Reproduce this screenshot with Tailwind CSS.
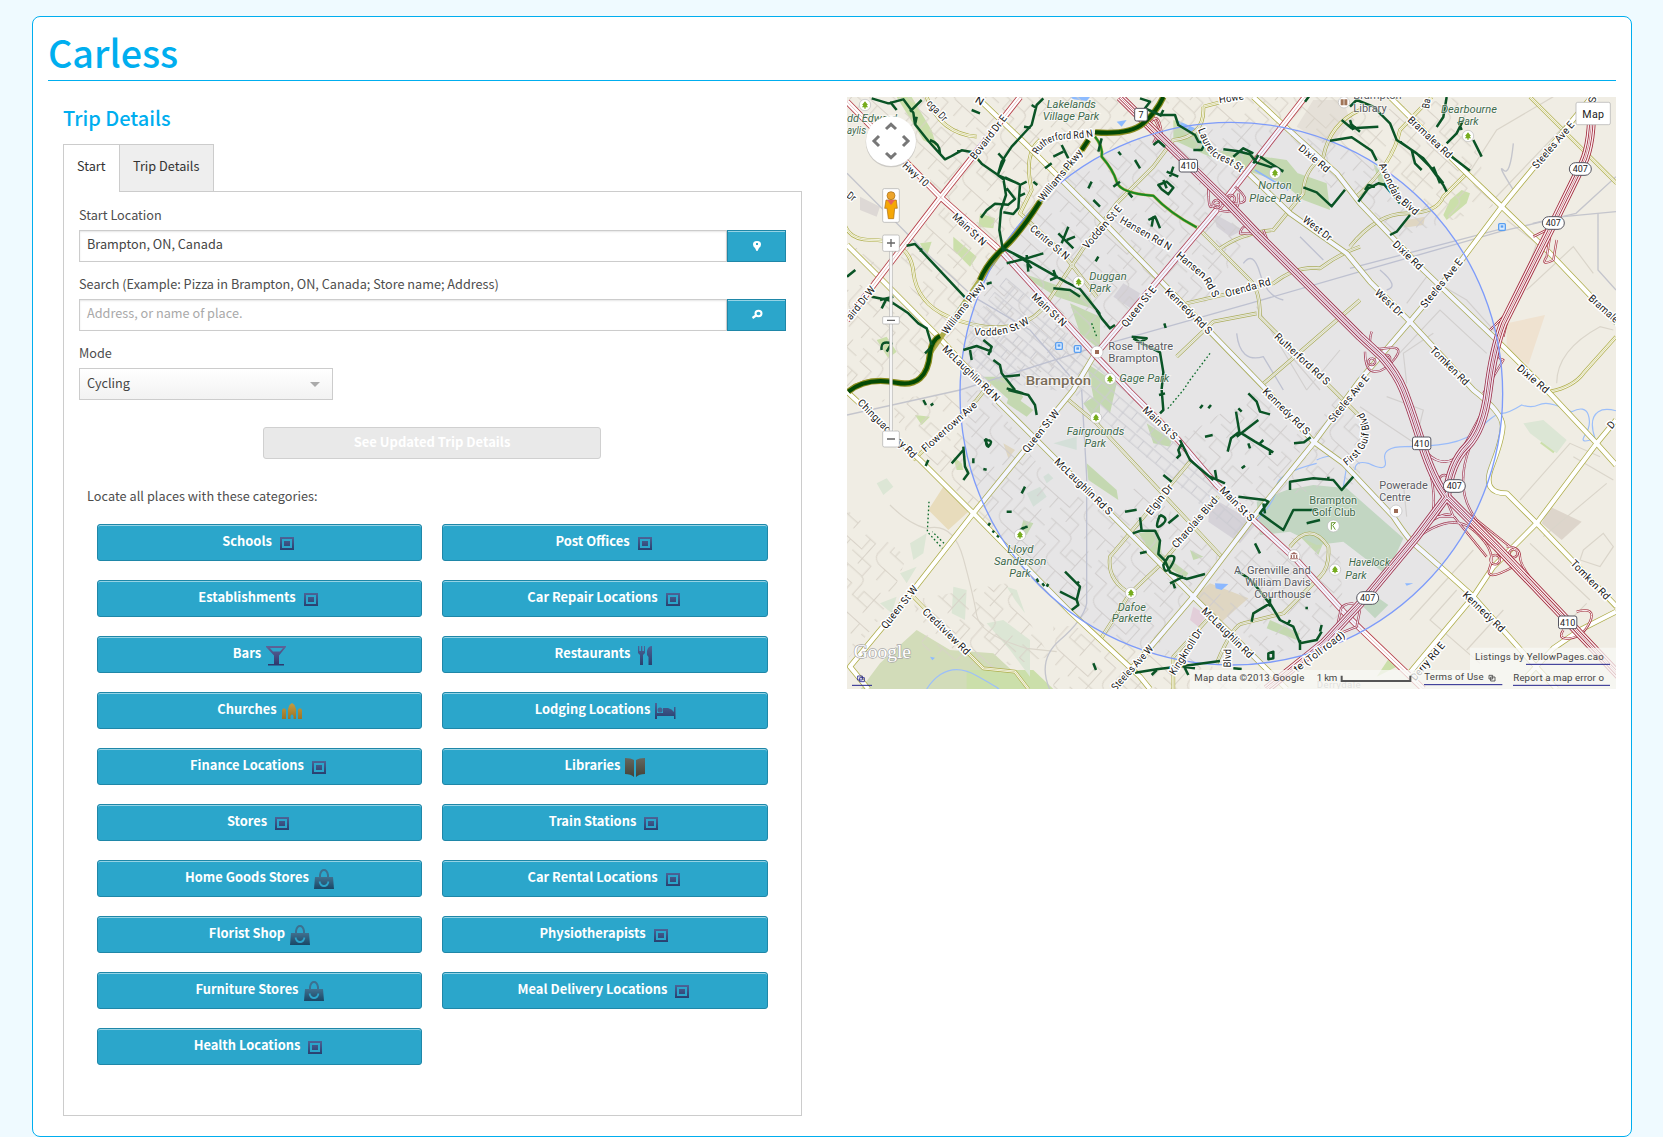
<!DOCTYPE html>
<html lang="en">
<head>
<meta charset="utf-8">
<title>Carless</title>
<script src="https://cdn.jsdelivr.net/npm/@tailwindcss/browser@4"></script>
</head>
<body class="bg-[#effaff] h-[1137px] overflow-hidden pt-4 px-8 font-['Noto_Sans_CJK_SC','Open_Sans',sans-serif] text-[12.7px] leading-5 text-[#4d4d4d]">
<svg width="0" height="0" class="absolute">
<defs>
<linearGradient id="navy" x1="0" y1="0" x2="0" y2="1"><stop offset="0" stop-color="#4d6396"/><stop offset="1" stop-color="#28406f"/></linearGradient>
<linearGradient id="plum" x1="0" y1="0" x2="0" y2="1"><stop offset="0" stop-color="#5f6398"/><stop offset="1" stop-color="#2c376c"/></linearGradient>
<linearGradient id="gold" x1="0" y1="0" x2="0" y2="1"><stop offset="0" stop-color="#c69c3e"/><stop offset="1" stop-color="#997429"/></linearGradient>
<linearGradient id="ink" x1="0" y1="0" x2="0" y2="1"><stop offset="0" stop-color="#64675f"/><stop offset="1" stop-color="#444237"/></linearGradient>
<linearGradient id="teal" x1="0" y1="0" x2="0" y2="1"><stop offset="0" stop-color="#40708f"/><stop offset="1" stop-color="#194766"/></linearGradient>
<symbol id="i-box" viewBox="0 0 22 22"><path fill="url(#navy)" fill-rule="evenodd" d="M4 5h14v13H4zM6 7v9h10V7zM8 9h6v5H8z"/></symbol>
<symbol id="i-bar" viewBox="0 0 22 22"><path fill="url(#plum)" fill-rule="evenodd" d="M1 2h20v1l-7 8.500V20H19v1.500H3V20h6v-8.500L1 3zM5 4l3 3.500h7L18 4z"/></symbol>
<symbol id="i-church" viewBox="0 0 22 22"><path fill="url(#gold)" d="M1 19V10l1-1.500h2l1 1.500v9zM17 19V10l1-1.500h2l1 1.500v9zM7 19V9l1.500-4L11 3l2.500 2L15 9v10h-2.500v-3l-1-1.500h-1l-1 1.500v3z"/></symbol>
<symbol id="i-food" viewBox="0 0 22 22"><path fill="url(#navy)" d="M4 2h1.300v5H7V2h1.300v5H10V2h1v7l-2 2v10H6V11L4 9zM18 2v19h-3.500v-8L13 11V7q1-5 5-5z"/></symbol>
<symbol id="i-bed" viewBox="0 0 22 22"><path fill="url(#navy)" d="M1 3h2v10H20V7h1.500v12H20v-3H3v3H1zM9 13V8h5q4 1 6 4v1z"/><circle cx="6" cy="10" r="2.500" fill="#44608f"/></symbol>
<symbol id="i-book" viewBox="0 0 22 22"><path fill="url(#ink)" d="M1 2q6 0 9 2v17q-3-3-9-3zM21 2q-6 0-9 2v17q3-3 9-3z"/></symbol>
<symbol id="i-bag" viewBox="0 0 22 22"><path fill="url(#teal)" d="M2 9h18l1 12H1z"/><path d="M7 10V7q1-5 4-5t4 5v3" fill="none" stroke="#3d708f" stroke-width="2"/><path d="M6.500 13.500q1 4.500 4.500 4.500t4.500-4.500" fill="none" stroke="#2ca4cb" stroke-width="1.800"/></symbol>
</defs>
</svg>
<main class="h-[1121px] w-[1600px] rounded-lg border border-[#00aeef] bg-white px-[15px]">
  <header class="h-16 border-b border-[#00aeef]">
    <h1 class="pt-1 text-[37.7px] leading-[61px] font-medium text-[#00aeef]">Carless</h1>
  </header>
  <div class="flex items-start">
    <section class="ml-[15px] w-[739px]">
      <h2 class="mt-[22px] h-[41px] text-[20px] leading-[30px] font-medium text-[#00aeef]">Trip Details</h2>
      <nav class="relative z-10 flex h-12 text-[#333]">
        <div class="w-14 border-t border-l border-[#ccc] bg-white pt-[11px] pl-[13px]">Start</div>
        <div class="w-[95px] border border-[#ccc] bg-[#eee] pt-[11px] pl-[13px] whitespace-nowrap">Trip Details</div>
      </nav>
      <div class="-mt-px h-[925px] border border-[#ccc] px-[15px] pt-[13px]">
        <label class="block h-[25px]">Start Location</label>
        <div class="flex h-8">
          <div class="w-[648px] border border-[#ccc] pt-[3px] pl-[7px] text-[#444] shadow-[inset_0_1px_2px_#0000001a]">Brampton, ON, Canada</div>
          <button class="flex w-[59px] justify-center border border-[#1f87a8] bg-[#2ba6cb] pt-[9px] shadow-[inset_0_1px_0_#ffffff80]"><svg width="10" height="12" viewBox="0 0 10 12"><path fill="#fff" fill-rule="evenodd" d="M5 1C2 1 1 2.500 1 4.500Q1 6.500 3 8l1.500 3h1L7 8Q9 6.500 9 4.500C9 2.500 8 1 5 1zM4 3h2v2H4z"/></svg></button>
        </div>
        <label class="mt-3 block h-[25px]">Search (Example: Pizza in Brampton, ON, Canada; Store name; Address)</label>
        <div class="flex h-8">
          <div class="w-[648px] border border-[#ccc] pt-[3px] pl-[7px] text-[#a9a9a9] shadow-[inset_0_1px_2px_#0000001a]">Address, or name of place.</div>
          <button class="flex w-[59px] justify-center border border-[#1f87a8] bg-[#2ba6cb] pt-[9px] shadow-[inset_0_1px_0_#ffffff80]"><svg width="12" height="11" viewBox="0 0 12 11"><ellipse cx="7.500" cy="4.500" rx="3" ry="2.700" fill="none" stroke="#fff" stroke-width="2"/><path d="M5 6.500L1.500 9" stroke="#fff" stroke-width="2.200"/></svg></button>
        </div>
        <label class="mt-3 block h-[25px]">Mode</label>
        <div class="flex h-8 w-[254px] justify-between border border-[#ccc] bg-linear-to-b from-white to-[#f2f2f2] pt-1 pr-3 pl-[7px] text-[#444]">Cycling<svg width="10" height="6" viewBox="0 0 10 6" class="mt-[9px]"><path fill="#aaa" d="M0 0h10L5 5z"/></svg></div>
        <button class="mt-[27px] ml-[184px] block h-8 w-[338px] rounded-[3px] border border-[#d0d0d0] bg-[#e9e9e9] pb-[3px] text-[13px] font-bold text-white">See Updated Trip Details</button>
        <p class="mt-[27px] mb-[18px] ml-2 tracking-[0.05px]">Locate all places with these categories:</p>
        <div id="cats" class="ml-[18px] grid grid-cols-[325px_326px] gap-x-5 gap-y-[19px]"></div>
      </div>
    </section>
    <svg id="map" class="mt-4 ml-[45px] h-[592px] w-[769px] font-[Roboto,sans-serif]" viewBox="21 21 2307 1776" preserveAspectRatio="none">
      <defs>
        <pattern id="streets" width="190" height="170" patternUnits="userSpaceOnUse" patternTransform="rotate(42)"><path d="M0 20H70Q90 20 90 40V80H150V20M0 90H40V170M20 20V55H65V110Q70 130 100 130H190M110 80V50H190M115 130V170M150 100V80M0 150H75V170M165 130V170M75 0V20M0 130H20V90" fill="none" stroke="#d8d2c8" stroke-width="3"/></pattern>
        <pattern id="town" width="70" height="54" patternUnits="userSpaceOnUse" patternTransform="rotate(40)"><path d="M0 5H70M12 5V54M45 5V34M0 34H70" fill="none" stroke="#d2d0cc" stroke-width="3"/></pattern>
      </defs>
      <path fill="#f0ede4" d="M0 0h2400v1900H0z"/>
      <g id="areas">
        <g fill="#cbdfaa">
          <path d="M170 21l45 0 60 100 15 50-40-20zM420 370l45 15-5 30-45-5zM340 440l70 60-20 30-50-50zM240 460l35-5-15 45zM110 750l30-10 30 45-25 20zM430 860l60 0 60 60-20 30zM520 540l230 80 20 40-120-40zM690 640l90 40 0 100-60-50zM1000 90l50 20 80 70 210 30 50 60-60 10-200-70-130-60zM1230 200l230 80 10 80-80-30zM1600 220l50 60-30 10zM1830 330l35-30 25 10-10 30-60 50-10-15z"/>
          <path d="M740 820l90 60-20 90-50-50zM510 910l70 50-20 20-60-40zM740 1120l90 80 5 30-90-60zM730 940l50-30 0 100zM225 975l45 5-25 25zM550 1290l30 10-20 35-20-10zM895 1330l60-10 10 70 80 60-10 15-90-60zM920 1000l20 60 50 10 5-20zM1385 1345l40-20 30 20-20 50zM1050 1380l40 20-30 10zM2120 1040l35 30-15 20-40-30zM340 1100l25 20 5 20-20 0zM1290 1590l90 40-10 20-90-35zM1610 1760l40-60 20 30z"/>
          <path d="M120 1720l110-100 100 60 130 10 120 110H60z" fill="#d2dcb9"/>
          <path d="M380 1740h200l60 57H380z"/>
        </g>
        <g fill="#c8dcbc">
          <path d="M1340 1200l80-15 100 10 170 150-50 110-130-100-80 10-80-40-90 10-10-100z"/>
          <path d="M1570 1550l40-30 35 25-40 40z"/>
        </g>
        <g fill="#dce6d5"><path d="M110 1180l30-15 20 25-30 25zM560 1210l40-20 20 30-40 30zM610 1160l15-10 15 15-20 15zM500 1490l30 10 25 70-30-40zM340 1490l40 10-5 90-40-20zM210 1360l50-30-10 60-30 20zM440 1600l50-10 80 60 0 110-60-80zM120 1540l50-20-15 50zM180 1450l50-20-30 50zM2050 1000l60-10 70 60-30 40-80-60zM640 1060l70-20 0 40z"/></g>
        <g fill="#e5e0d8"><path d="M1420 30l90 0 20 60-60 80-100-60z"/><path d="M2130 1250l95 45-60 55-60-50z" fill="#ddd5cb"/></g>
        <path fill="#e8dcbc" d="M310 1190l75 75-60 55-60-60zM1110 1480l115 45-80 70-90-70zM1700 390l55-10-5 25-60 8zM490 1060l35 20-20 25z"/>
        <path fill="#efe2d0" d="M2000 700l115-25-50 150-65-50z"/>
        <path fill="#ddd8d5" d="M60 320l60 30-10 30-50-20zM850 580l50 30-20 50-60-40zM1110 1220l140 80-50 60-95-65zM1120 370l90 50-40 20-40-30z"/>
        <path fill="#ecd3d6" d="M1060 1550l40 25-25 35-25-20z"/>
        <path fill="#8dbbff" d="M1010 90l55 25 0 15-45-20zM690 21l60 0-10 12-40-5zM830 95l30-5-15 20zM1125 1480l40 2-20 18-18-5zM1695 1480l25 0-20 7zM270 1700l15 3-8 8z"/>
      </g>
      <g id="local" stroke="none">
        <path fill="url(#streets)" d="M21 21H840L1150 320 940 560 770 780 490 480 300 320 21 30zM21 450L130 540 118 562 21 500zM300 340L760 800 420 900 290 735 170 520zM21 600L118 562 290 735 240 850 21 890zM830 21H1500V330L1330 110 1150 320zM1330 110L1860 21 1960 350 1680 440 1560 330zM950 560L1150 330 1240 420 1060 690zM120 930L330 1180 400 1260 560 1070 430 900zM400 1260L560 1080 690 1240 740 1200 920 1400 1040 1520 900 1760 690 1560zM21 1260L200 1400 140 1560 21 1710zM220 1530L500 1480 630 1700 440 1740 250 1680zM800 1270L900 1180 1140 1400 1060 1500zM1000 1060L1270 890 1400 1060 1250 1260zM1270 1310L1500 1400 1510 1570 1300 1700 1070 1520zM1410 1060L1500 880 1560 990 1560 1180 1300 1220zM640 1797L640 1600 900 1650 1300 1797z"/>
        <path fill="url(#town)" d="M500 560L760 800 1260 1290 1200 1350 700 910 380 860 390 700z"/>
        <g fill="none" stroke="#dad5ca" stroke-width="3.500"><path d="M1880 260l90-140 170-100M1960 330l220-230M2000 390l90 70-40 110M1700 640l60-80 120 70 90 100M1650 820l150-160 140 130M1700 880l-10-90 90-60M2060 600l140-130 60 80M2150 880q0-100 130-170l40 10M2040 1230l150-170 90 40M2070 1360l180 170M2110 1340l190-160M2200 1100l120 70M1900 1380l-190 210M1850 1500l-80 90 150 130M1990 1560l-110 120M2230 1380l60-50 30 40-40 60-60-20zM2240 1540l-70 70M150 1245q60 60 110 70 80-20 110 90t40 170 150 100l90 10M1400 900l-150-250M1320 760l120 140M1500 780l-100 120M1560 950l180 120M1640 920l110 40-30 120M1640 1200l50-20 10 100"/></g>
      </g>
      <g fill="none" stroke="#c4c5cc" stroke-width="5">
        <path d="M21 975L360 900 770 770 1230 640 1560 545 1980 425 2170 380 2328 365M1530 535L1990 415M21 250L260 490 400 620 570 720 700 870" stroke-width="4"/>
        <path d="M725 900l15 260 0 380q-10 50-80 110t-30 150M2020 160q-10 100-30 80t30 60M2328 260l-120 110-130 30M2274 370v170l54 60M1210 520q30-40 50 30t70 80M1190 730q10 90 80 70l60 100M1620 540q60 50 20 60M1380 440l70 70" stroke-width="4"/>
        <path d="M1430 1110q60-30 90 20l-10 60M1545 1140q0-30 40-20 60 30 50-10t60-40 130-10 100-50 60-40 60-25q30 10 50 0t50 0 50 20q40-20 50 10t-10 60 30 10q-20-60 10-80t110 20M260 1797q60-90 150-40t60 40M1250 1290q60-60 60-100t120-70" stroke="#9cbffa" stroke-width="3.500"/>
        <path d="M1245 240l100 60" stroke="#8fb7fa"/>
      </g>
      <g id="roads" fill="none" stroke-linejoin="round"></g>
      <circle cx="1174" cy="911" r="814" fill="#8898ff" fill-opacity=".09" stroke="#7d9bfa" stroke-width="4"/>
      <g id="trails" fill="none" stroke="#0a5426" stroke-width="7.500" stroke-linejoin="round">
        <path stroke="#8a8c1e" stroke-width="19" d="M25 905Q80 860 170 878T270 790Q275 750 300 738M420 570Q440 520 490 475T600 335M725 180L745 150M765 127Q870 135 910 100T970 21"/>
        <path stroke="#034a05" stroke-width="12" d="M25 905Q80 860 170 878T270 790Q275 750 300 738M420 570Q440 520 490 475T600 335M725 180L745 150M765 127Q870 135 910 100T970 21"/>
        <path stroke="#a9a83f" stroke-width="9" d="M765 140Q790 170 785 200 820 240 830 275T940 317Q990 370 1070 412"/>
        <path stroke="#188a23" stroke-width="6" d="M765 140Q790 170 785 200 820 240 830 275T940 317Q990 370 1070 412"/>
        <path d="M95 25l50 15 45-12 30 40 5 35 40 50 50 55 20-10 30-17 30 5 30 35 50 35 60 25M270 150q30 10 30 40M150 35l20 25M210 65l35-35M230 80l-5 25M355 180l0 10M395 60l25 10M610 25l-20 20-15 60-60 65-30 45-10 35M575 45l15 10M552 110l20 3M475 190l18 20-20 45 20 15M490 265l8 50-15 45-5 60 12 65M500 295l25 32-20 17-40-3-25 20-17 22M495 262l45 22-5 70-15 18-30-5M540 285l20-10M535 320l20-10M200 467l25-5 150 160M240 485l5-10M490 475l80 40 110 62 40 20 60 75M500 520l60-15 50-15M520 490l40 25 15 20M560 495l5 50M640 595l50 5 30 20M650 565l-10-25M630 570l25-10M95 620l50 10 60 40 30 30 25 15 15 50M120 630l40-10M140 625l-15 30M150 630l8 15M125 780q-5-30 30-20l-15 25M255 790l15-15M370 780l40-12 45 17M390 780l5 30M430 750l25 20-10 25M460 810l20 15 5 25 40 50M490 860l50-5M21 560l25-20M655 430l45 45M685 410l-20 50M680 450l25-10M615 235l20-15M640 200l30-15M665 165l20 40M600 320l25-15M760 330l20 20M755 275l-10 20M440 582l15-5M580 275l12 10"/>
        <path d="M900 25l30 10-15 20 45 20 45 0 10 30 50 30 10 20 35 5M960 80l10-20M1060 180h25l10-20M1150 178l40 5 40 10 20 25 80 25M1180 200l30-25 30 15M1240 220l15-25M1260 200l70 45M835 185l8 10M885 210l15 25M980 245l35 15M1000 230l-10 30M955 285l25-10 20 18-15 20-20-15zM970 270l10 25M925 390l20-10 5 10 10 25M940 380l-5 30M865 308l12 14M940 165l15-12 20 18M785 145l-10 40M840 275l-20 15M1390 292l40 15 45 42 40-50M1395 35l15-20M1530 50l20-20 50 20 50 50 20 50 60 40 40 40 40 55 10 20M1530 90l10 30M1470 152l65-10 60 40 15 30M1505 90l30 25 80-5M1530 100l30 25M1680 155l70 50 60 75M1715 180l10 40 20 20M1780 230l20 50M1820 21l-10 60-20 30M1870 90l-20 40-30 30M1855 95l10 25M1900 150l25 50M1835 200l55 42M1555 335l30-40 30-15 60 15M1575 300l10-15 20 5M1630 280l50 60M1710 375l-40 50-20 10M770 660l15 25 25 30 15-10M875 740l45 5-20 12 60 30 10 60-5 50M880 745l25 15M973 700l4 14M775 500l-8 14"/>
        <path d="M505 900l60 15 20 30 5 30M500 895l50 15M965 900l5 60-10 10M975 910l-18 5M370 1070l5 60 10 20-15 20M335 1120l35-40M400 1105v15M430 1137l10 2M265 1110l-8 18M440 1045q-5 20 5 25l-10-20q30 0 10 20M250 930l8 15M272 946l8-5M555 1190l-10 20M500 1265l15 0M545 1315l18-5M675 1445l45 45-10 40-50-25M710 1530l5 15-20 15M717 1475l-8 8M590 1466l5 10M607 1480l6 8M620 1490l5-8M445 1307l5-8M458 1328l4-6M472 1342l3-6M760 1720l8 20M540 1320l20-10"/>
        <path d="M1020 1050l30 60 70 60M1025 1060l-10 20 5 15-10 10M1110 1160l45 20M1125 1140l5 30M1188 965l10 60-25 20-10 40M1190 1040l65-50M1205 1030l40 25 55 32M1225 1060l5 15M1260 1060l10-10M1290 1080v15M1205 1135l10-8M1195 955l10 10M1095 1040l23-5M1080 955l8-10M1105 955l8-10M1225 910l25 25 10 30 30 8M1362 1060l30-3 20-15M970 1155l25 20M855 1265l35-6M900 1282l5 40 40 0 15 30-5 40 20 20 15 35 50 20 55-15M878 1330l30-10M960 1275q30 10 5 30t-5-30M985 1300l30-25M985 1400q30-10 10 25t-25 0zM1030 1460l-40 20M1000 1480l5 15M900 1390l20-5M1195 1220l80 10 10 5-25 35 70 50 30-60 70 0M1270 1240l5 30M1350 1200l0-25 70-10 60 5 25 30 35-40M1465 1160l0 10M1400 1300l40-10M1245 1360l15 30M1193 1445q40 20 60 50l35 45M1290 1540l-50 30-5 25M1290 1540l30 50 40 20 20 50 50-10 15-25M1380 1650v30M1345 1600l5-10M1440 1625l5-20M1290 1550v-30M1285 1690l15-5 0 20-15 3zM885 1748l65-10 80-10 110-15M950 1740l-15 15M1030 1725l15 30M1030 1730l35 5M1180 1735l25 2M1400 1550v8"/>
        <path stroke="#0c6b2a" stroke-dasharray="5 7" stroke-width="4" d="M267 1235v0l-5 90 45 50M312 1360l-35-35M1110 790l-60 80-20 30-50 60M755 700l15 40"/>
      </g>
      <g id="labels"></g>
      <g id="ui">
        <g fill="#f8f8f5" fill-opacity=".75"><path d="M1050 1740h1278v57H1050zM1890 1673h438v67H1890z"/></g>
        <g font-size="29" fill="#444"><text x="1063" y="1774" textLength="330">Map data ©2013 Google</text><text x="1430" y="1774" textLength="62">1 km</text><text x="1905" y="1711" textLength="386">Listings by YellowPages.cao</text><text x="1753" y="1771" textLength="178">Terms of Use</text><text x="2020" y="1773" textLength="272">Report a map error o</text></g>
        <path d="M1505 1757v16H1711v-16" fill="none" stroke="#555" stroke-width="6"/>
        <path d="M2058 1723h252M1752 1784h235M2019 1786h291M36 1786h60" stroke="#22228c" stroke-width="3"/>
        <path d="M1947 1756h11v11h-11zM1952 1761h13v12h-13z" fill="none" stroke="#444" stroke-width="2.500"/>
        <path d="M53 1758h14v12H53zM59 1763h14v12H59z" fill="none" stroke="#22228c" stroke-width="2.500"/>
        <text x="41" y="1703" font-family="Liberation Serif" font-size="56" textLength="172" lengthAdjust="spacingAndGlyphs" fill="#fff" stroke="#aaa" stroke-width="4" paint-order="stroke">Google</text>
        <circle cx="153" cy="156" r="76" fill="#999" opacity=".4"/><circle cx="153" cy="153" r="75" fill="#fff"/>
        <path d="M138 117l15-14 15 14M138 189l15 14 15-14M117 138l-15 15 15 15M189 138l15 15-15 15" fill="none" stroke="#777" stroke-width="9"/>
        <g fill="#fff" stroke="#aaa" stroke-width="2"><path d="M149 480h8v550h-8z"/><rect x="128" y="296" width="50" height="101" rx="5"/><rect x="128" y="435" width="50" height="49" rx="5"/><rect x="128" y="1023" width="50" height="48" rx="5"/><rect x="128" y="680" width="50" height="22" rx="3"/><rect x="2208" y="37" width="103" height="67" rx="5"/></g>
        <path d="M141 459h24M153 447v24M141 1047h24M141 691h24" stroke="#666" stroke-width="4"/>
        <path d="M138 330h31l3 25-8 0-3 31h-16l-4-31-7 0z" fill="#f5a706" stroke="#a66a13" stroke-width="2"/><path d="M141 330h24l-12 15z" fill="#e5645c"/><circle cx="153" cy="317" r="12" fill="#eda52c" stroke="#a66a13" stroke-width="2"/>
        <text x="2227" y="83" font-size="32" textLength="65" fill="#222">Map</text>
      </g>
    </svg>
  </div>
</main>
<script>
const cats=[["Schools","box"],["Post Offices","box"],["Establishments","box"],["Car Repair Locations","box"],["Bars","bar"],["Restaurants","food"],["Churches","church"],["Lodging Locations","bed"],["Finance Locations","box"],["Libraries","book"],["Stores","box"],["Train Stations","box"],["Home Goods Stores","bag"],["Car Rental Locations","box"],["Florist Shop","bag"],["Physiotherapists","box"],["Furniture Stores","bag"],["Meal Delivery Locations","box"],["Health Locations","box"]];
document.getElementById("cats").innerHTML=cats.map(([t,i])=>`<button class="flex h-[37px] justify-center gap-1 rounded-[3px] border border-[#1f87a8] bg-[#2ba6cb] pt-[6px] pl-px text-[12.9px] font-bold text-white shadow-[inset_0_1px_0_#ffffff80]"><span>${t}</span><svg class="mt-px h-[22px] w-[22px]"><use href="#i-${i}"/></svg></button>`).join("");

const olive=["M21 465L118 562 290 735 475 935 640 1100 810 1270 960 1420 1060 1520 1340 1797","M21 905L240 1110 400 1270 690 1565 900 1760 930 1797","M760 800L700 900 400 1270 220 1500 30 1730 85 1797","M410 21L560 165 780 385 950 560 1270 890 1420 1055 1510 1120 1660 1280Q1700 1340 1720 1360L1800 1430 1900 1520 2060 1700 2150 1797","M1240 21L1330 105 1490 250 1560 340 1750 540 1970 750 2120 900 2270 1060 2328 1125","M1650 21L1870 240 1985 350 2130 490 2330 700","M2255 21L1985 350 1865 510 1710 695 1560 870 1420 1060 1250 1270 1060 1520 915 1690 820 1797","M1220 245L1350 370 1520 490 1590 575 1710 695 1900 900Q1990 970 1988 1010T1955 1130 2000 1210L2090 1300 2330 1550","M2328 990L2270 1060 2090 1300 1960 1430 1900 1520 1700 1760","M2328 1565L2220 1620 2140 1675 2060 1760"];
const thin=["M220 1520L390 1695 430 1735 525 1745 565 1797","M2070 21L2330 280","M2328 740L2230 850Q2200 890 2130 905","M1070 410L1230 570Q1260 600 1260 680L1560 980","M1040 640L1300 580Q1370 525 1440 535 1500 490 1560 470","M1010 800L1120 695 1250 670M1260 890L1560 630","M1090 50Q1095 140 1000 150L940 230 830 340 740 460 700 520 620 640Q580 700 500 710T325 680 220 545 95 450 21 310","M1090 50L1200 21","M1560 60Q1470 100 1450 200 1390 240 1390 310L1300 420Q1200 430 1135 480","M1775 21L1680 120Q1660 220 1550 320","M1880 250L1810 320Q1790 370 1700 370T1530 470","M1050 1115L920 1270 810 1400Q800 1470 870 1510L960 1425 1135 1220M870 1510L780 1650","M680 925L770 1000 1145 1400","M1350 1370Q1410 1290 1465 1370 1470 1430 1440 1460L1330 1570 1210 1600Q1180 1600 1130 1720","M220 1110L410 930 450 880","M600 150Q550 190 575 300L540 370 660 480 770 620","M260 21Q300 130 410 140","M1110 1580L1000 1700 1000 1797"];
const red=["M21 35L302 322 490 490 765 795 870 905 1015 1050 1130 1185 1250 1300 1370 1410 1510 1565 1560 1615 1750 1797","M540 21L302 322 118 562 21 690","M1395 21L1155 330 950 575 770 790"];
const hwy=["M840 21L950 130 1155 330 1250 430 1560 740 1625 800Q1670 850 1690 900T1745 1060 1820 1220L1970 1370 2180 1590 2340 1760","M2255 60Q2255 180 2220 237L2140 400 1990 700Q1960 780 1945 900T1880 1070 1820 1220L1730 1340 1580 1520 1450 1660 1280 1797"];
const ramps=["M1105 290q0 70 10 60t70-10 0-50M1195 310q10 70-60 50M1130 330a12 12 0 1 0 1 0M1172 315a12 12 0 1 0 1 0M1575 785q0 60 30 60t60-40-30-30-40-50M1595 805a10 10 0 1 0 1 0M1640 795a10 10 0 1 0 1 0M1725 1040Q1790 1150 1855 1100L1930 960M1745 1080Q1820 1150 1870 1080M1750 1070Q1800 1230 1770 1290M1790 1180q20-50 50 0l-20 40zM1890 1070Q1840 1200 1910 1290L1960 1330 2010 1370M1710 1360Q1830 1260 1900 1320T1950 1430 2020 1430L2100 1500M1790 1280l30-50 20 50zM1720 1340Q1820 1240 1850 1290L1940 1400M2000 1370q40 0 40 30t60 100M1965 1395a14 14 0 1 0 1 0M2020 1378a12 12 0 1 0 1 0M2170 1620q-20 30 20 25t60-50-40-30M2080 440l60-30M2130 440l-10 60q-20 30 20 10l10-60M1950 720l60-60-20 80M1990 700q-40 100 0 110l-60 100M1500 1570q0-30 40-30M1500 1570l-20 90M1560 1560l-10 50-50 20M930 60l30 60-20 40M925 110q30-60 40 20M1200 430q10-40 40 0zM1270 420l20 50"];
const L=(ps,c,w)=>`<g stroke="${c}" stroke-width="${w}">${ps.map(d=>`<path d="${d}"/>`).join("")}</g>`;
document.getElementById("roads").innerHTML=L(thin,"#aead4a",11)+L(thin,"#f9f8ea",7)+L(thin,"#bdbc72",1.5)+L(olive,"#aead4a",17)+L(olive,"#fff",12.5)+L(["M30 900Q80 860 170 878T270 790L420 570 490 475 600 335 740 160"],"#aead4a",15)+L(red,"#b7404a",19)+L(red,"#fff",14)+L(red,"#d18a91",1.5)+L(ramps,"#a83a48",7)+L(ramps,"#fbf2f3",3)+L(hwy,"#a0283a",26)+L(hwy,"#fbeff1",21)+L(hwy,"#a0283a",12.5)+L(hwy,"#fff",7.500)+L(hwy,"#a0283a",1.500);

const streets=[["oga Dr","M265 35L318 90"],["N","M408 27L430 40"],["Bovaird Dr E","M397 205L495 78"],["Rutherford Rd N","M585 190Q610 140 680 137T758 128"],["Williams Pkwy","M602 328L722 182"],["Hwy 10","M192 222L262 285"],["Main St N","M342 375L434 462"],["Centre St N","M574 412L684 504"],["Vodden St E","M735 472L840 350"],["Dr","M24 312L45 328"],["Main St N","M580 615L675 705"],["Williams Pkwy","M313 728L428 578"],["aird Dr W","M25 685L100 592"],["Vodden St W","M403 725Q500 735 565 690"],["McLaughlin Rd N","M312 772L475 930"],["Howe","M1137 30L1212 18"],["Laurelcrest St","M1083 115Q1110 190 1140 200T1208 240"],["Dixie Rd","M1380 170L1466 242"],["West Dr","M1392 385L1473 447"],["Hansen Rd N","M843 388L993 474"],["Hansen Rd S","M1013 492L1096 560 1130 620"],["Orenda Rd","M1156 612L1292 574"],["Queen St E","M851 708L943 592"],["Kennedy Rd S","M980 600L1112 728"],["Rutherford Rd S","M1308 735L1465 880"],["Bramalea Rd","M1708 85L1832 200"],["Avondale Blvd","M1625 220L1668 315 1732 370"],["Ba","M1757 55L1762 25"],["Steeles Ave E","M2083 232L2198 98"],["Dixie Rd","M1663 458L1744 535"],["Steeles Ave E","M1748 650L1862 510"],["West Dr","M1610 603L1686 675"],["Tomken Rd","M1775 775L1882 882"],["Dixie Rd","M2035 830L2123 905"],["Bramalea","M2250 620L2345 705"],["S","M2257 38L2258 20"],["Chinguacousy Rd","M58 933L225 1100"],["Flowertown Ave","M250 1080L407 940"],["Queen St W","M554 1084L652 962"],["McLaughlin Rd S","M648 1110L813 1270"],["Queen St W","M130 1612L228 1490"],["Creditview Rd","M252 1560L385 1690"],["Main St S","M913 955L1008 1045"],["Kennedy Rd S","M1273 900L1405 1030"],["Steeles Ave E","M1472 993L1582 858"],["First Gulf Blvd","M1514 1120Q1610 1050 1560 970"],["Elgin Dr","M925 1272L993 1185"],["Charolais Blvd","M1002 1370L1128 1225"],["Main St S","M1144 1195L1238 1290"],["McLaughlin Rd","M1090 1558L1235 1700"],["Kingknoll Dr","M996 1752L1080 1618"],["Blvd","M1162 1732L1163 1676"],["Steeles Ave W","M820 1797L935 1670"],["te (Toll road)","M1365 1740L1512 1630"],["Kennedy Rd","M1873 1510L1990 1622"],["Tomken Rd","M2197 1415L2305 1525"],["Derry Rd E","M1718 1768L1810 1660"],["D","M2308 1012L2321 997"]];
let out='<g font-size="31" fill="#161616" stroke="#fff" stroke-width="9" stroke-linejoin="round" paint-order="stroke">';
const probe=document.createElementNS("http://www.w3.org/2000/svg","path");
streets.forEach(([t,d],i)=>{probe.setAttribute("d",d);const n=probe.getTotalLength();out+=`<path id="s${i}" d="${d}" fill="none" stroke="none"/><text dy="10" textLength="${n-1}" lengthAdjust="spacingAndGlyphs"><textPath href="#s${i}" textLength="${n-1}" lengthAdjust="spacingAndGlyphs">${t}</textPath></text>`});
out+='</g>';
const tree=[[75,45],[716,576],[1305,249],[1884,138],[810,867],[768,983],[540,1335],[873,1509],[1485,1439]];
out+=tree.map(([x,y])=>`<g transform="translate(${x} ${y})"><circle r="17" fill="#fff" stroke="#bbb" stroke-width="2"/><path d="M0-11l9 11-4 0 4 7H2v4h-4V7h-7l4-7-4 0z" fill="#76ac1e"/></g>`).join("");
out+=[[771,786],[1668,1263]].map(([x,y])=>`<circle cx="${x}" cy="${y}" r="18" fill="#fff" stroke="#bbb" stroke-width="2"/><path d="M${x-6} ${y-6}h12v12h-12z" fill="#9c6a55"/>`).join("");
// library, golf course and courthouse markers
out+='<g fill="#fff" stroke="#bbb" stroke-width="2"><circle cx="1512" cy="37" r="17"/><circle cx="1480" cy="1308" r="18"/><circle cx="1362" cy="1397" r="18"/></g><path d="M1502 28h9v18h-9zM1513 28h9v18h-9z" fill="#a07458"/><path d="M1474 1298v21M1486 1298l-8 8 8 13M1474 1298h13" fill="none" stroke="#6b9a33" stroke-width="3"/><path d="M1350 1393l12-7 12 7zM1352 1395h4v9h-4zM1360 1395h4v9h-4zM1368 1395h4v9h-4zM1350 1405h24v3h-24z" fill="#a06a62"/>';
out+=[[657,768],[713,777],[1986,411]].map(([x,y])=>`<rect x="${x-10}" y="${y-10}" width="20" height="20" rx="3" fill="#dcecff" stroke="#5a9ff0" stroke-width="4"/><path d="M${x-4} ${y-5}h8v7h-8z" fill="#5a9ff0"/>`).join("");
const parks=[["Lakelands",620,53,148],["Village Park",608,89,170],["dd Edward",21,97,150],["aylis",21,133,57],["Duggan",748,569,112],["Park",748,605,65],["Norton",1255,298,100],["Place Park",1228,337,155],["Dearbourne",1803,70,168],["Park",1853,106,63],["Gage Park",838,877,150],["Fairgrounds",680,1036,173],["Park",733,1072,65],["Lloyd",502,1388,78],["Sanderson",462,1424,157],["Park",508,1460,64],["Dafoe",833,1562,85],["Parkette",815,1597,121],["Havelock",1526,1429,124],["Park",1516,1467,64]];
const T=(a,f)=>`<g font-size="33" fill="${f}" stroke="#fff" stroke-opacity=".65" stroke-width="5" paint-order="stroke">${a.map(([t,x,y,w])=>`<text x="${x}" y="${y}" textLength="${w}" lengthAdjust="spacingAndGlyphs">${t}</text>`).join("")}</g>`;
out+='<g font-style="italic">'+T(parks,"#3f6a4c")+'</g>'+T([["Brampton",1408,1243,143],["Golf Club",1415,1277,132]],"#3f6a4c");
out+=T([["Rose Theatre",805,780,194],["Brampton",805,816,150],["Powerade",1618,1197,145],["Centre",1618,1233,94],["A. Grenville and",1182,1452,230],["William Davis",1216,1488,196],["Courthouse",1243,1524,170],["Brampton",1540,27,145],["Library",1540,65,100]],"#5a5b62");
out+='<text x="557" y="884" font-size="41" font-weight="500" textLength="196" lengthAdjust="spacingAndGlyphs" fill="#7b6d59" stroke="#fff" stroke-opacity=".7" stroke-width="6" paint-order="stroke">Brampton</text><text x="1430" y="1794" font-size="29" textLength="132" fill="#999">Derrydale</text>';
const shields=[["7",903,74,38,0],["410",1045,227,55,0],["407",2221,237,66,1],["407",2140,399,66,1],["410",1745,1060,55,0],["407",1843,1188,66,1],["407",1583,1524,66,1],["410",2183,1597,55,0]];
out+=shields.map(([t,x,y,w,r])=>`<rect x="${x-w/2}" y="${y-19}" width="${w}" height="38" rx="${r?19:6}" fill="#fff" stroke="#565660" stroke-width="3"/><text x="${x}" y="${y+10}" font-size="27" text-anchor="middle" fill="#222">${t}</text>`).join("");
document.getElementById("labels").innerHTML=out;
</script>
</body>
</html>
